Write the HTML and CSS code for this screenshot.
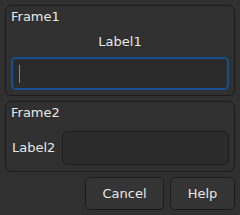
FILE: index.html
```html
<!DOCTYPE html>
<html lang="en">
<head>
    <meta charset="UTF-8">
    <link rel="stylesheet" href="styles.css">
    <title>Dialog</title>
</head>
<body>
    <div class="dialog">
        <div class="frame frame-one">
            <div class="frame-title">Frame1</div>
            <div class="label-center">Label1</div>
            <div class="entry entry-focus"><span class="caret"></span></div>
        </div>
        <div class="frame frame-two">
            <div class="frame-title">Frame2</div>
            <div class="row">
                <div class="row-label">Label2</div>
                <div class="entry entry-wide"></div>
            </div>
        </div>
        <div class="buttons">
            <button class="btn btn-cancel">Cancel</button>
            <button class="btn btn-help">Help</button>
        </div>
    </div>
</body>
</html>
```

FILE: styles.css
```css
body {
    margin: 0;
    background-color: #303030;
    font-family: "DejaVu Sans", sans-serif;
    font-size: 13px;
    line-height: 16px;
    color: #e8e8e6;
    width: 240px;
    height: 215px;
    overflow: hidden;
}

.dialog {
    display: flex;
    flex-direction: column;
    gap: 5px;
    padding: 5px;
}

.frame {
    border: 1px solid #1c1c1c;
    border-radius: 6px;
    padding: 3px 5px 5px 5px;
    display: flex;
    flex-direction: column;
}

.frame-one {
    height: 81px;
}

.frame-two {
    height: 61px;
}

.frame-title {
    padding-left: 0;
    height: 16px;
}

.label-center {
    text-align: center;
    margin-top: 9px;
}

.entry {
    box-sizing: border-box;
    height: 33px;
    background-color: #2b2b2b;
    border: 1px solid #1c1c1c;
    border-radius: 5px;
}

.entry-focus {
    margin-top: 7px;
    border: 2px solid #17508f;
    display: flex;
    align-items: center;
    padding-left: 6px;
}

.caret {
    width: 1px;
    height: 18px;
    background-color: #8a8a8a;
}

.row {
    display: flex;
    align-items: center;
    margin-top: 10px;
}

.row-label {
    margin-left: 1px;
    margin-right: 7px;
}

.entry-wide {
    flex: 1;
    height: 34px;
}

.buttons {
    display: flex;
    justify-content: flex-end;
    gap: 6px;
}

.btn {
    box-sizing: border-box;
    height: 33px;
    background-color: #343434;
    border: 1px solid #1c1c1c;
    border-radius: 5px;
    color: #e8e8e6;
    font-family: "DejaVu Sans", sans-serif;
    font-size: 13px;
    padding: 0;
}

.btn-cancel {
    width: 79px;
}

.btn-help {
    width: 65px;
}
```
